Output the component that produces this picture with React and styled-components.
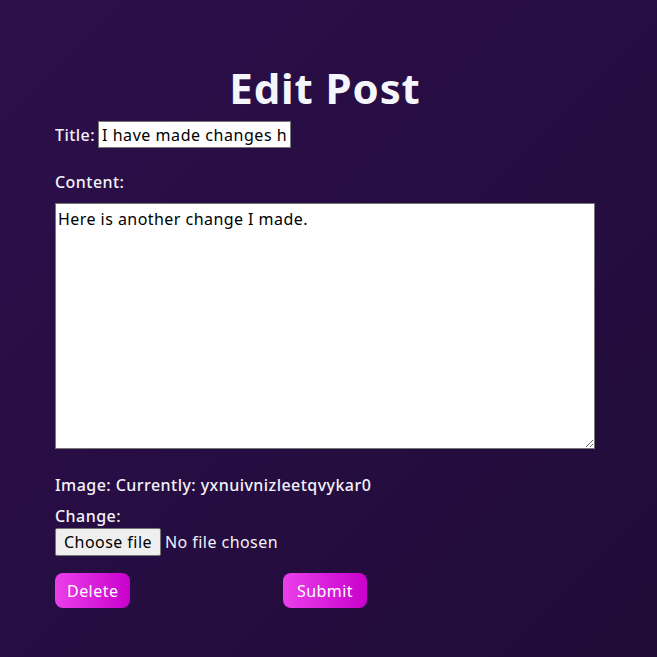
import React from 'react';
import styled, { createGlobalStyle } from 'styled-components';

const GlobalStyle = createGlobalStyle`
  html, body {
    margin: 0;
    padding: 0;
  }
  body {
    font-family: "Noto Sans", "Open Sans", sans-serif;
  }
`;

const Page = styled.div`
  min-height: 657px;
  box-sizing: border-box;
  background: linear-gradient(135deg, #2d0f4b 0%, #260d42 50%, #200c37 100%);
  color: #f4f2fa;
  padding: 62px 62px 40px 55px;
`;

const Heading = styled.h1`
  margin: 0 0 7px;
  text-align: center;
  font-size: 42px;
  font-weight: 700;
  letter-spacing: 0.9px;
  line-height: 52px;
  color: #f4f6fc;
`;

const Form = styled.form`
  display: flex;
  flex-direction: column;
  letter-spacing: 0.45px;
`;

const Row = styled.div`
  display: flex;
  align-items: center;
  gap: 3px;
  margin-bottom: ${(p) => p.$gap || 0}px;
`;

const Label = styled.label`
  font-size: 16px;
  font-weight: 500;
  line-height: 20px;
  margin-bottom: ${(p) => p.$gap || 0}px;
`;

const TextInput = styled.input`
  width: 193px;
  height: 27px;
  box-sizing: border-box;
  font-family: inherit;
  font-size: 16px;
  letter-spacing: 0.55px;
  padding: 1px 3px;
  border: 1px solid #767676;
  background: #fff;
  color: #000;
`;

const TextArea = styled.textarea`
  width: 540px;
  height: 246px;
  box-sizing: border-box;
  font-family: inherit;
  font-size: 16px;
  letter-spacing: 0.45px;
  padding: 4px 2px;
  border: 1px solid #767676;
  margin-bottom: 26px;
  color: #000;
  resize: vertical;
`;

const FileRow = styled.div`
  display: flex;
  align-items: center;
  gap: 4px;
  margin-top: 2px;
  margin-bottom: 17px;
  font-size: 16px;
`;

const FileButton = styled.span`
  display: inline-block;
  padding: 3px 8px;
  background: #efefef;
  color: #000;
  border: 1px solid #767676;
  border-radius: 2px;
  font-size: 16px;
  line-height: 20px;
`;

const Actions = styled.div`
  display: grid;
  grid-template-columns: 228px auto;
  justify-items: start;
`;

const ActionButton = styled.button`
  height: 35px;
  padding: 0 ${(p) => p.$pad || 12}px;
  border: none;
  border-radius: 8px;
  font-family: inherit;
  font-size: 16px;
  letter-spacing: 0.45px;
  color: #fff;
  background: linear-gradient(90deg, #ea40ea 0%, #c900cc 100%);
  cursor: pointer;
`;

export default function App() {
  return (
    <>
      <GlobalStyle />
      <Page>
        <Heading>Edit Post</Heading>
        <Form onSubmit={(e) => e.preventDefault()}>
          <Row $gap={24}>
            <Label>Title:</Label>
            <TextInput defaultValue="I have made changes here" />
          </Row>
          <Label $gap={11}>Content:</Label>
          <TextArea defaultValue="Here is another change I made." />
          <Label $gap={11}>Image: Currently: yxnuivnizleetqvykar0</Label>
          <Label>Change:</Label>
          <FileRow>
            <FileButton>Choose file</FileButton>
            <span>No file chosen</span>
          </FileRow>
          <Actions>
            <ActionButton type="button">Delete</ActionButton>
            <ActionButton type="submit" $pad={14}>Submit</ActionButton>
          </Actions>
        </Form>
      </Page>
    </>
  );
}
